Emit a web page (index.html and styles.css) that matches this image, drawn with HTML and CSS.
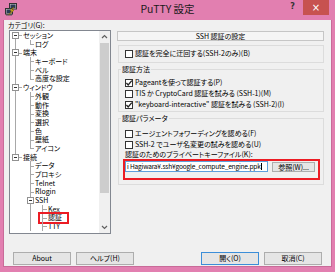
FILE: index.html
```html
<!DOCTYPE html>
<html lang="ja">
<head>
  <meta charset="UTF-8" />
  <title>PuTTY 設定</title>
  <link rel="stylesheet" href="styles.css">
</head>
<body>
  <div class="window">
    <!-- Title bar -->
    <div class="titlebar">
      <div class="tb-left">
        <svg class="app-icon" width="12" height="13" viewBox="0 0 12 13">
          <rect x="4.5" y="0.5" width="7" height="5.5" fill="#c9c9c9" stroke="#333"/>
          <rect x="5.5" y="1.5" width="5" height="3.5" fill="#2b3a55"/>
          <rect x="0.5" y="5.5" width="7" height="5.5" fill="#c9c9c9" stroke="#333"/>
          <rect x="1.5" y="6.5" width="5" height="3.5" fill="#2b3a55"/>
          <rect x="1" y="11" width="6" height="1.5" fill="#555"/>
          <path d="M9 4 L5 7.5 L7 7.8 L3.5 12 L9 7.2 L7 7 Z" fill="#f5d21e" stroke="#7a5a00" stroke-width="0.5"/>
        </svg>
      </div>
      <div class="tb-title">PuTTY 設定</div>
      <div class="tb-right">
        <span class="help">?</span>
        <span class="close">×</span>
      </div>
    </div>

    <div class="client">
      <div class="main">
        <!-- Category tree -->
        <div class="cat">
          <div class="cat-label">カテゴリ(G):</div>
          <div class="tree">
            <div class="tree-rows">
              <div class="row"><i class="g c0 bx first"><b class="pm"></b></i><span>セッション</span></div>
              <div class="row"><i class="g c0 pipe"></i><i class="g c1 ell"></i><span>ログ</span></div>
              <div class="row"><i class="g c0 bx"><b class="pm"></b></i><span>端末</span></div>
              <div class="row"><i class="g c0 pipe"></i><i class="g c1 tee"></i><span>キーボード</span></div>
              <div class="row"><i class="g c0 pipe"></i><i class="g c1 tee"></i><span>ベル</span></div>
              <div class="row"><i class="g c0 pipe"></i><i class="g c1 ell"></i><span>高度な設定</span></div>
              <div class="row"><i class="g c0 bx"><b class="pm"></b></i><span>ウィンドウ</span></div>
              <div class="row"><i class="g c0 pipe"></i><i class="g c1 tee"></i><span>外観</span></div>
              <div class="row"><i class="g c0 pipe"></i><i class="g c1 tee"></i><span>動作</span></div>
              <div class="row"><i class="g c0 pipe"></i><i class="g c1 tee"></i><span>変換</span></div>
              <div class="row"><i class="g c0 pipe"></i><i class="g c1 tee"></i><span>選択</span></div>
              <div class="row"><i class="g c0 pipe"></i><i class="g c1 tee"></i><span>色</span></div>
              <div class="row"><i class="g c0 pipe"></i><i class="g c1 tee"></i><span>壁紙</span></div>
              <div class="row"><i class="g c0 pipe"></i><i class="g c1 ell"></i><span>アイコン</span></div>
              <div class="row"><i class="g c0 bx last"><b class="pm"></b></i><span>接続</span></div>
              <div class="row"><i class="g c0"></i><i class="g c1 tee"></i><span>データ</span></div>
              <div class="row"><i class="g c0"></i><i class="g c1 tee"></i><span>プロキシ</span></div>
              <div class="row"><i class="g c0"></i><i class="g c1 tee"></i><span>Telnet</span></div>
              <div class="row"><i class="g c0"></i><i class="g c1 tee"></i><span>Rlogin</span></div>
              <div class="row"><i class="g c0"></i><i class="g c1 bx sub"><b class="pm"></b></i><span>SSH</span></div>
              <div class="row"><i class="g c0"></i><i class="g c1 pipe"></i><i class="g c2 tee"></i><span>Kex</span></div>
              <div class="row"><i class="g c0"></i><i class="g c1 pipe"></i><i class="g c2 tee"></i><span class="mark">認証</span></div>
              <div class="row"><i class="g c0"></i><i class="g c1 pipe"></i><i class="g c2 tee"></i><span>TTY</span></div>
            </div>
            <div class="vscroll">
              <div class="arr">
                <svg width="7" height="5" viewBox="0 0 7 5"><path d="M1 4 L3.5 1.5 L6 4" fill="none" stroke="#606060" stroke-width="1.2"/></svg>
              </div>
              <div class="track"><div class="thumb"></div></div>
              <div class="arr">
                <svg width="7" height="5" viewBox="0 0 7 5"><path d="M1 1 L3.5 3.5 L6 1" fill="none" stroke="#606060" stroke-width="1.2"/></svg>
              </div>
            </div>
          </div>
        </div>

        <!-- Settings panel -->
        <div class="panel">
          <div class="panel-head">SSH 認証の設定</div>

          <fieldset class="grp grp-plain">
            <div class="grp-body">
              <div class="chk"><span class="cb"></span>認証を完全に迂回する(SSH-2のみ)(B)</div>
            </div>
          </fieldset>

          <fieldset class="grp">
            <legend>認証方法</legend>
            <div class="grp-body">
              <div class="chk"><span class="cb on"><svg width="8" height="8" viewBox="0 0 8 8"><path d="M1.4 4 L3.2 5.9 L6.8 1.6" fill="none" stroke="#222" stroke-width="1.3"/></svg></span>Pageantを使って認証する(P)</div>
              <div class="chk"><span class="cb"></span>TIS か CryptoCard 認証を試みる (SSH-1)(M)</div>
              <div class="chk"><span class="cb on"><svg width="8" height="8" viewBox="0 0 8 8"><path d="M1.4 4 L3.2 5.9 L6.8 1.6" fill="none" stroke="#222" stroke-width="1.3"/></svg></span>"keyboard-interactive" 認証を試みる (SSH-2)(I)</div>
            </div>
          </fieldset>

          <fieldset class="grp grp-params">
            <legend>認証パラメータ</legend>
            <div class="grp-body">
              <div class="chk"><span class="cb"></span>エージェントフォワーディングを認める(F)</div>
              <div class="chk"><span class="cb"></span>SSH-2 でユーザ名変更の試みを認める(U)</div>
              <div class="field-label">認証のためのプライベートキーファイル(K):</div>
              <div class="keyfile">
                <div class="input">i Hagiwara¥.ssh¥google_compute_engine.ppk<span class="caret"></span></div>
                <button class="btn btn-browse">参照(W)...</button>
              </div>
            </div>
          </fieldset>
        </div>
      </div>

      <!-- Dialog buttons -->
      <div class="buttons">
        <button class="btn">About</button>
        <button class="btn">ヘルプ(H)</button>
        <span class="spacer"></span>
        <button class="btn btn-default">開く(O)</button>
        <button class="btn">取消(C)</button>
      </div>
    </div>
  </div>
</body>
</html>
```

FILE: styles.css
```css
/* Reset & Base */
*, *::before, *::after { box-sizing: border-box; margin: 0; padding: 0; }
html, body { width: 335px; height: 272px; overflow: hidden; background: #e27fb0; }
body {
  font-family: "Noto Sans CJK JP", "Noto Sans", sans-serif;
  font-size: 7px;
  font-feature-settings: "palt";
  color: #000;
}
button { font: inherit; color: inherit; cursor: pointer; }

/* Window frame */
.window { width: 335px; height: 272px; padding: 0 4px 5px 4px; background: #e27fb0; display: flex; flex-direction: column; }

/* Title bar */
.titlebar { height: 20px; margin: 0 -4px; display: grid; grid-template-columns: 1fr auto 1fr; align-items: start; }
.tb-left { padding: 3px 0 0 5px; }
.app-icon { display: block; }
.tb-title { font-size: 10.5px; line-height: 17px; color: #1a1a1a; font-feature-settings: normal; }
.tb-right { display: flex; justify-content: flex-end; align-items: flex-start; padding-right: 6px; }
.tb-right .help { font-family: "DejaVu Sans", sans-serif; font-size: 8px; font-weight: 700; color: #333; line-height: 13px; margin-right: 8px; }
.tb-right .close { width: 26px; height: 15px; background: #c75250; color: #fff; font-family: "DejaVu Sans", sans-serif; font-size: 10px; line-height: 15px; text-align: center; }

/* Client area */
.client { flex: 1; background: #f0f0f0; border: 1px solid #c96b99; border-top: none; margin: 0 -1px; padding: 0 1px; display: flex; flex-direction: column; }
.main { display: flex; }

/* Category tree */
.cat { width: 106px; flex: none; }
.cat-label { line-height: 10px; padding-left: 3px; }
.tree { margin-left: 4px; width: 102px; height: 204px; border: 1px solid #828790; background: #fff; display: flex; }
.tree-rows { flex: 1; }
.row { height: 8.7px; line-height: 8.7px; display: flex; align-items: stretch; white-space: nowrap; }

.g { position: relative; flex: none; display: block; }
.c0 { width: 13px; --x: 5px; }
.c1 { width: 12px; --x: 7px; }
.c2 { width: 13px; --x: 7px; }
.pipe::before, .tee::before, .ell::before, .bx::before {
  content: ""; position: absolute; left: var(--x); width: 1px; top: 0; bottom: 0; background: #a8a8a8;
}
.ell::before, .bx.last::before { bottom: 50%; }
.bx.first::before { top: 50%; }
.tee::after, .ell::after {
  content: ""; position: absolute; left: var(--x); right: 1px; top: 50%; height: 1px; background: #a8a8a8;
}
.bx::after { content: ""; position: absolute; left: calc(var(--x) + 4px); right: 1px; top: 50%; height: 1px; background: #a8a8a8; }
.bx.sub::after { display: none; }
.pm { position: absolute; left: calc(var(--x) - 3px); top: 1px; width: 7px; height: 7px; border: 1px solid #919191; background: #fff; z-index: 1; }
.pm::after { content: ""; position: absolute; left: 1px; right: 1px; top: 2px; height: 1px; background: #333; }

.mark { position: relative; }
.mark::after { content: ""; position: absolute; left: -10px; right: -7px; top: -1.5px; bottom: -1.5px; border: 2px solid #ec1c24; }

/* Scrollbar */
.vscroll { width: 11px; flex: none; background: #f0f0f0; display: flex; flex-direction: column; }
.vscroll .arr { height: 11px; display: flex; align-items: center; justify-content: center; }
.vscroll .track { flex: 1; padding: 1px 1px; }
.vscroll .thumb { height: 150px; background: #cdcdcd; }

/* Settings panel */
.panel { width: 207px; margin-left: 6px; padding-top: 11px; }
.panel-head { height: 10px; line-height: 8px; text-align: center; border: 1px solid #c6c6c6; background: #f5f5f5; }

.grp { margin-left: 1px; border: 1px solid #dcdcdc; min-width: 0; }
.grp legend { margin-left: 2px; padding: 0 1px; line-height: 10px; }
.grp-plain { margin-top: 4px; }
.grp-plain .grp-body { padding: 2px 0 3px 6px; }
.grp + .grp { margin-top: 1px; }
.grp-body { padding: 3px 0 1px 6px; }
.grp-params { margin-top: 2px; }
.grp-params .grp-body { padding: 5px 0 4px 6px; }

.chk { height: 11px; line-height: 11px; display: flex; align-items: center; white-space: nowrap; }
.cb { width: 8px; height: 8px; border: 1px solid #333; background: #fff; margin-right: 2px; flex: none; position: relative; }
.cb svg { position: absolute; left: -1px; top: -1px; }
.field-label { height: 9px; line-height: 9px; white-space: nowrap; }

.keyfile { margin-left: -2px; margin-right: 3px; border: 2px solid #ec1c24; padding: 0 3px 6px 0; display: flex; align-items: flex-start; gap: 4px; }
.input { width: 143px; height: 11px; line-height: 9px; border: 1px solid #5f9fdc; background: #fff; padding-left: 1px; white-space: nowrap; overflow: hidden; font-size: 6.6px; letter-spacing: -0.2px; }
.caret { display: inline-block; width: 1px; height: 7px; background: #000; vertical-align: -1px; }

/* Buttons */
.btn { height: 13px; line-height: 11px; border: 1px solid #adadad; background: #e5e5e5; text-align: center; }
.btn-browse { width: 43px; height: 10px; line-height: 8px; margin-top: 1px; }
.buttons { margin-top: 18px; padding: 0 8px; display: flex; gap: 5px; }
.buttons .btn { width: 58px; }
.buttons .spacer { flex: 1; }
.btn-default { border-color: #3c8ed8; }
```
